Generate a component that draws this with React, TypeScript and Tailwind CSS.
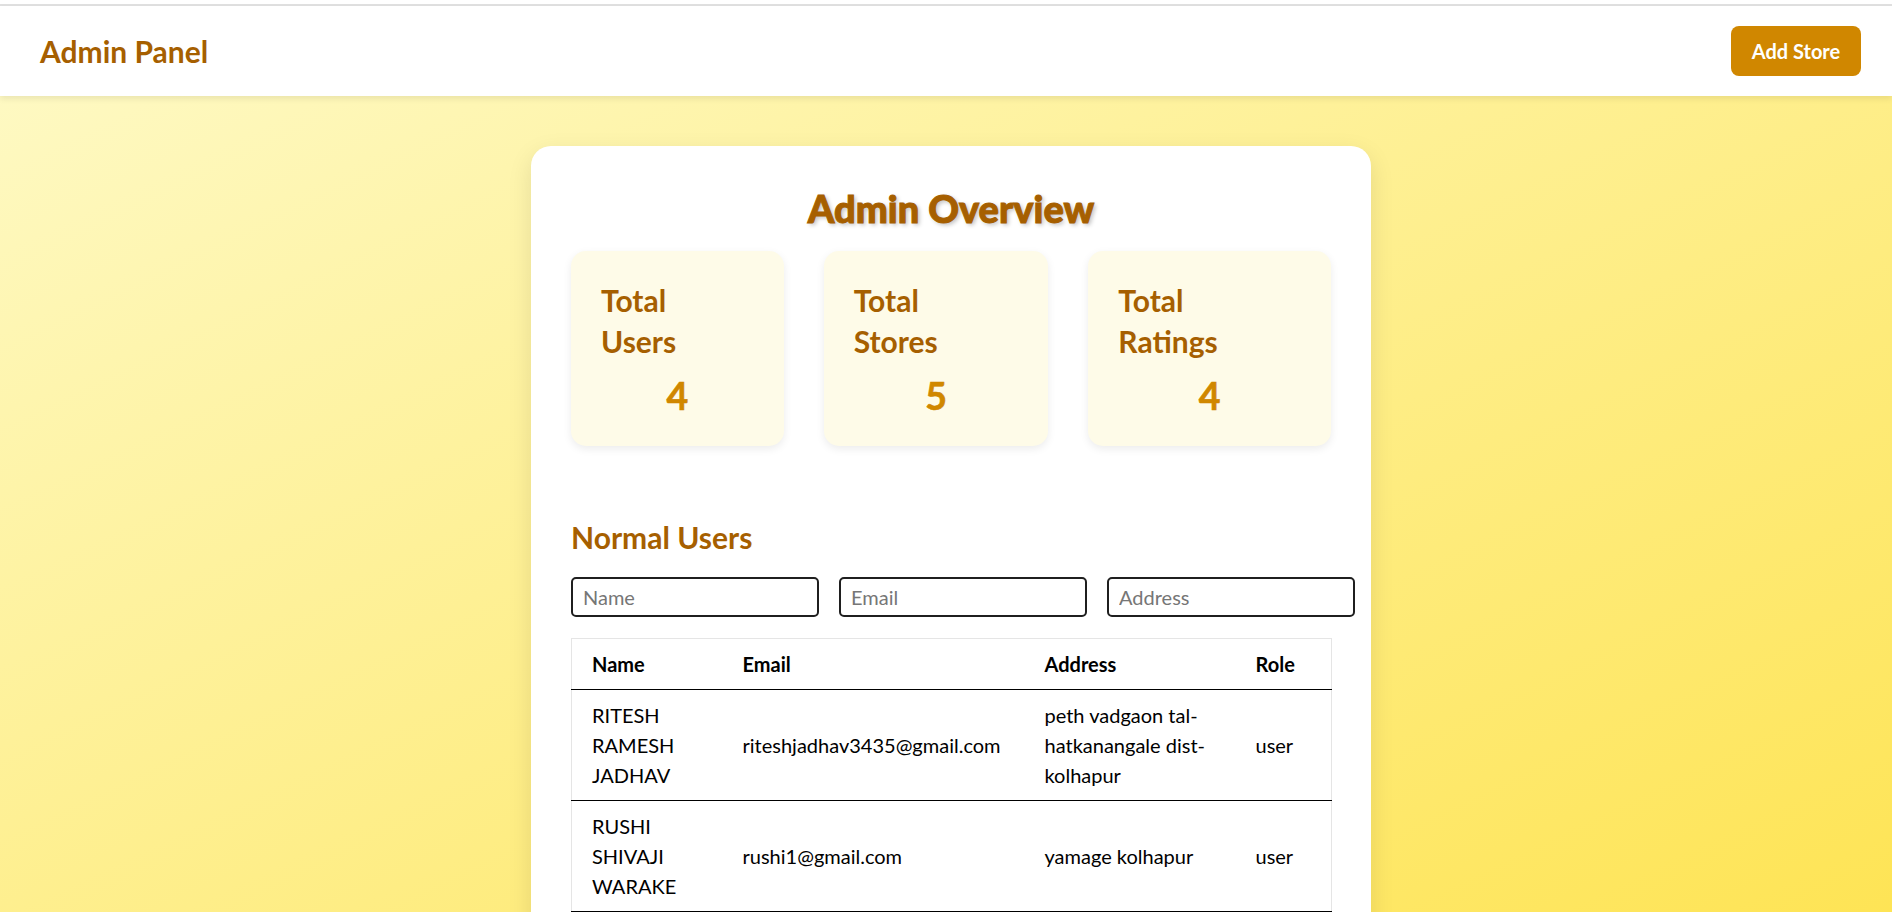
import React from "react";

const users = [
  {
    name: ["RITESH", "RAMESH", "JADHAV"],
    email: "riteshjadhav3435@gmail.com",
    address: ["peth vadgaon tal-", "hatkanangale dist-", "kolhapur"],
    role: "user",
  },
  {
    name: ["RUSHI", "SHIVAJI", "WARAKE"],
    email: "rushi1@gmail.com",
    address: ["yamage kolhapur"],
    role: "user",
  },
];

const stats = [
  { top: "Total", bottom: "Users", value: 4, width: "w-[213px]" },
  { top: "Total", bottom: "Stores", value: 5, width: "w-[225px]" },
  { top: "Total", bottom: "Ratings", value: 4, width: "w-[243px]" },
];

export default function App() {
  return (
    <div className="min-h-screen font-['Lato','Noto_Sans',sans-serif] text-black bg-fixed bg-[linear-gradient(to_bottom_right,#fefac8,#fee455)]">
      {/* Navbar */}
      <div className="bg-white">
        <div className="h-[4px]"></div>
        <div className="h-[2px] bg-[#e0e0e0]"></div>
        <nav className="relative z-10 h-[90px] flex items-center justify-between pl-[40px] pr-[31px] bg-white shadow-[0_3px_6px_rgba(0,0,0,0.08)]">
          <h1 className="text-[30px] font-bold text-[#a65f00] leading-[45px]">Admin Panel</h1>
          <button className="w-[130px] h-[50px] rounded-[8px] bg-[#d08700] text-white text-[20px] font-bold">
            Add Store
          </button>
        </nav>
      </div>

      {/* Main */}
      <main className="flex justify-center pt-[50px] pb-[40px] pl-[10px]">
        <div className="w-[840px] bg-white rounded-[20px] p-[40px] shadow-[0_8px_24px_rgba(0,0,0,0.1)]">
          <h2 className="text-center text-[38px] leading-[45px] font-black text-[#a65f00] [-webkit-text-stroke:1px_#a65f00] [text-shadow:2px_2px_4px_rgba(0,0,0,0.25)] mb-[20px]">
            Admin Overview
          </h2>

          {/* Stats */}
          <div className="flex gap-[40px]">
            {stats.map((s) => (
              <div
                key={s.bottom}
                className={`${s.width} bg-[#fefbe8] rounded-[15px] px-[30px] pt-[29px] pb-[28px] shadow-[0_3px_8px_rgba(0,0,0,0.08)]`}
              >
                <h3 className="text-[30px] leading-[41px] font-bold text-[#a65f00]">
                  <span className="block">{s.top}</span>
                  <span className="block">{s.bottom}</span>
                </h3>
                <p className="mt-[11px] text-center text-[37.5px] leading-[45px] font-bold text-[#d08700] [-webkit-text-stroke:0.6px_#d08700]">
                  {s.value}
                </p>
              </div>
            ))}
          </div>

          {/* Normal users */}
          <h3 className="mt-[69px] mb-[17px] text-[30px] leading-[45px] font-bold text-[#a65f00]">Normal Users</h3>
          <div className="flex gap-[20px] w-[784px]">
            {["Name", "Email", "Address"].map((p) => (
              <input
                key={p}
                placeholder={p}
                className="w-[248px] h-[40px] shrink-0 border-2 border-[#1f1f1f] rounded-[5px] px-[10px] text-[20px] placeholder:text-[#767676] outline-none"
              />
            ))}
          </div>

          <table className="mt-[21px] w-[760px] table-fixed border-collapse border border-[#e5e5e5] text-[20px] leading-[30px]">
            <colgroup>
              <col className="w-[151px]" />
              <col className="w-[302px]" />
              <col className="w-[211px]" />
              <col className="w-[96px]" />
            </colgroup>
            <thead>
              <tr className="border-b border-black">
                <th className="px-[20px] py-[10px] text-left font-bold">Name</th>
                <th className="px-[20px] py-[10px] text-left font-bold">Email</th>
                <th className="px-[20px] py-[10px] text-left font-bold">Address</th>
                <th className="px-[20px] py-[10px] text-left font-bold">Role</th>
              </tr>
            </thead>
            <tbody>
              {users.map((u) => (
                <tr key={u.email} className="border-b border-black">
                  <td className="px-[20px] py-[10px] align-middle">
                    {u.name.map((n) => (
                      <span key={n} className="block">{n}</span>
                    ))}
                  </td>
                  <td className="px-[20px] py-[10px] align-middle">{u.email}</td>
                  <td className="px-[20px] py-[10px] align-middle">
                    {u.address.map((a) => (
                      <span key={a} className="block">{a}</span>
                    ))}
                  </td>
                  <td className="px-[20px] py-[10px] align-middle">{u.role}</td>
                </tr>
              ))}
            </tbody>
          </table>
        </div>
      </main>
    </div>
  );
}
